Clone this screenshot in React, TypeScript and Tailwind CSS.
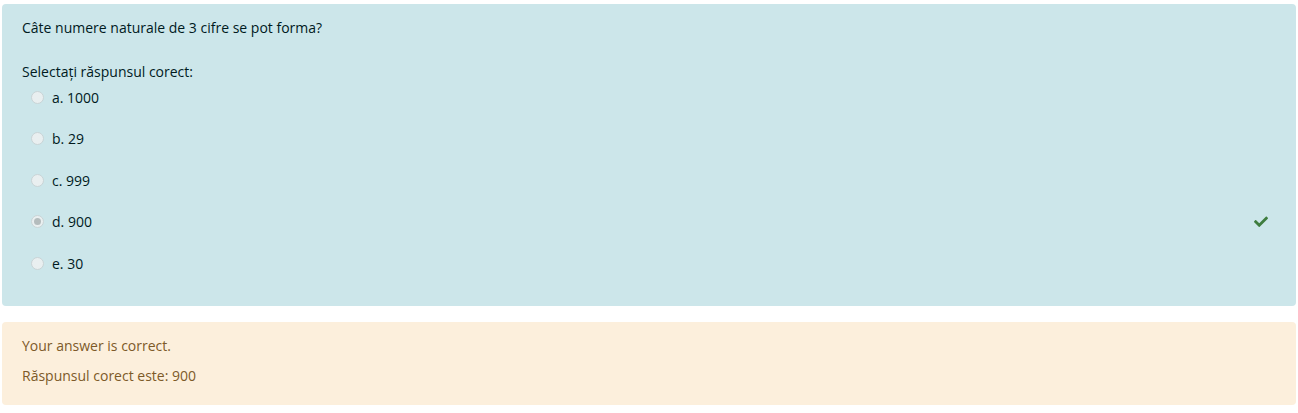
import React from 'react';

const options = [
  { key: 'a', label: 'a. 1000', checked: false },
  { key: 'b', label: 'b. 29', checked: false },
  { key: 'c', label: 'c. 999', checked: false },
  { key: 'd', label: 'd. 900', checked: true },
  { key: 'e', label: 'e. 30', checked: false },
];

const Radio: React.FC<{ checked: boolean }> = ({ checked }) => (
  <span className="flex h-[13px] w-[13px] items-center justify-center rounded-full border border-[#c9d4d6] bg-[#e9eff0]">
    {checked && <span className="h-[7px] w-[7px] rounded-full bg-[#b4bcbd]" />}
  </span>
);

const CheckIcon = () => (
  <svg width="14" height="11" viewBox="0 0 512 400" className="text-[#3e7d3f]" fill="currentColor">
    <path d="M173.9 389.4L7.5 223c-10-10-10-26.2 0-36.2l36.2-36.2c10-10 26.2-10 36.2 0L192 262.7 432.1 22.6c10-10 26.2-10 36.2 0l36.2 36.2c10 10 10 26.2 0 36.2L210.1 389.4c-10 10-26.2 10-36.2 0z" />
  </svg>
);

export default function App() {
  return (
    <div className="min-h-screen bg-white px-[2px] pt-[4px] font-['Open_Sans',sans-serif] text-[14px] leading-[21px]">
      <div className="rounded-[4px] bg-[#cce6ea] px-[20px] pt-[13px] pb-[11.5px] text-[#001a1e]">
        <div>Câte numere naturale de 3 cifre se pot forma?</div>
        <div className="mt-[23px]">Selectați răspunsul corect:</div>
        <div className="mt-[4.5px]">
          {options.map(o => (
            <div key={o.key} className="flex h-[41.5px] items-start">
              <div className="flex h-[21px] items-center pl-[9px]">
                <Radio checked={o.checked} />
                <span className="ml-[8px]">{o.label}</span>
              </div>
              {o.checked && (
                <div className="ml-auto mr-[8px] flex h-[21px] items-center">
                  <CheckIcon />
                </div>
              )}
            </div>
          ))}
        </div>
      </div>
      <div className="mt-[16px] rounded-[4px] bg-[#fcefdc] px-[20px] pt-[13px] pb-[19px] text-[#7d5a29]">
        <div>Your answer is correct.</div>
        <div className="mt-[9px]">Răspunsul corect este: 900</div>
      </div>
    </div>
  );
}
